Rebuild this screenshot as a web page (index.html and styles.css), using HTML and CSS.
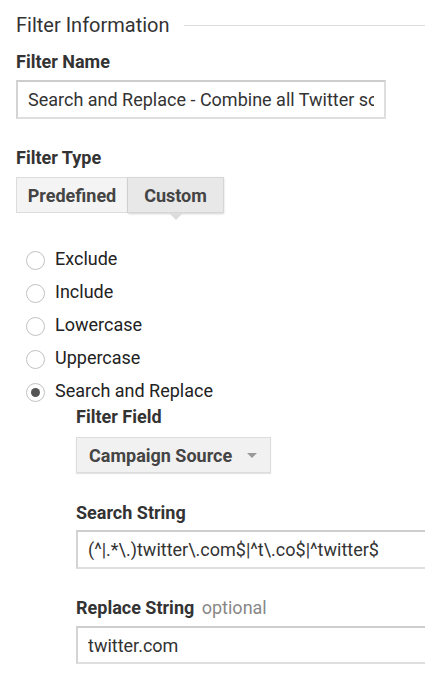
FILE: index.html
```html
<!DOCTYPE html>
<html lang="en">
<head>
    <meta charset="UTF-8">
    <meta name="viewport" content="width=device-width, initial-scale=1.0">
    <title>Filter Information</title>
    <link rel="stylesheet" href="styles.css">
</head>
<body>
    <div class="panel">
        <div class="section-title">
            <h2>Filter Information</h2>
            <span class="rule"></span>
        </div>

        <label class="field-label name-label" for="filter-name">Filter Name</label>
        <input id="filter-name" class="text-input name-input" type="text" value="Search and Replace - Combine all Twitter sources" readonly>

        <label class="field-label type-label">Filter Type</label>
        <div class="toggle">
            <button class="toggle-btn predefined">Predefined</button>
            <button class="toggle-btn custom active">Custom</button>
        </div>

        <ul class="radio-list">
            <li class="radio-row"><span class="radio"></span><span class="radio-text">Exclude</span></li>
            <li class="radio-row"><span class="radio"></span><span class="radio-text">Include</span></li>
            <li class="radio-row"><span class="radio"></span><span class="radio-text">Lowercase</span></li>
            <li class="radio-row"><span class="radio"></span><span class="radio-text">Uppercase</span></li>
            <li class="radio-row"><span class="radio checked"></span><span class="radio-text">Search and Replace</span></li>
        </ul>

        <div class="sub-fields">
            <label class="field-label field-label-first">Filter Field</label>
            <div class="dropdown">
                <span>Campaign Source</span>
                <span class="caret"></span>
            </div>

            <label class="field-label search-label" for="search-string">Search String</label>
            <input id="search-string" class="text-input wide-input" type="text" value="(^|.*\.)twitter\.com$|^t\.co$|^twitter$" readonly>

            <label class="field-label replace-label" for="replace-string">Replace String <span class="optional">optional</span></label>
            <input id="replace-string" class="text-input wide-input short-input" type="text" value="twitter.com" readonly>
        </div>
    </div>
</body>
</html>
```

FILE: styles.css
```css
* {
    margin: 0;
    padding: 0;
    box-sizing: border-box;
}

body {
    font-family: Roboto, 'Noto Sans', sans-serif;
    color: #222;
    background-color: #fff;
    overflow: hidden;
}

.panel {
    padding: 12px 0 0 16px;
    width: 425px;
}

.section-title {
    display: flex;
    align-items: center;
    gap: 14px;
    height: 26px;
}

.section-title h2 {
    font-size: 20px;
    font-weight: 400;
    color: #333;
    line-height: 26px;
    white-space: nowrap;
}

.rule {
    flex: 1;
    height: 1px;
    background-color: #ddd;
}

.field-label {
    display: block;
    font-size: 18px;
    font-weight: 700;
    color: #333;
    line-height: 22px;
}

.name-label {
    margin-top: 13px;
}

.text-input {
    display: block;
    margin-top: 7px;
    height: 39px;
    padding: 0 10px;
    border: 2px solid #dedede;
    border-top-color: #cdcdcd;
    border-left-color: #d4d4d4;
    border-radius: 0;
    font-family: inherit;
    font-size: 18px;
    color: #333;
    background-color: #fff;
    outline: none;
}

.name-input {
    width: 370px;
}

.type-label {
    margin-top: 28px;
}

.toggle {
    display: flex;
    margin-top: 8px;
}

.toggle-btn {
    position: relative;
    height: 36px;
    font-family: inherit;
    font-size: 18px;
    font-weight: 700;
    color: #444;
    text-align: center;
    background-color: #f4f4f4;
    border: 1px solid #dcdcdc;
}

.predefined {
    width: 112px;
}

.custom {
    width: 96px;
    border-left: none;
}

.toggle-btn.active {
    background-color: #e8e8e8;
    border-color: #d6d6d6;
    box-shadow: 0 1px 2px rgba(0, 0, 0, 0.18);
}

.toggle-btn.active::after {
    content: "";
    position: absolute;
    left: 50%;
    bottom: -8px;
    margin-left: -7px;
    border-left: 7px solid transparent;
    border-right: 7px solid transparent;
    border-top: 7px solid #dcdcdc;
}

.radio-list {
    list-style: none;
    margin-top: 31px;
    padding-left: 10px;
}

.radio-row {
    display: flex;
    align-items: center;
    height: 33px;
    font-size: 18px;
    color: #222;
}

.radio {
    flex: none;
    width: 19px;
    height: 19px;
    margin-right: 10px;
    border: 1px solid #c2c2c2;
    border-radius: 50%;
    display: flex;
    align-items: center;
    justify-content: center;
}

.radio.checked::after {
    content: "";
    width: 9px;
    height: 9px;
    border-radius: 50%;
    background-color: #555;
}

.radio-text {
    padding-bottom: 5px;
}

.sub-fields {
    padding-left: 60px;
}

.field-label-first {
    margin-top: -3px;
}

.dropdown {
    display: flex;
    align-items: center;
    justify-content: space-between;
    width: 195px;
    height: 36px;
    margin-top: 9px;
    padding: 0 13px 0 12px;
    font-size: 18px;
    font-weight: 700;
    color: #444;
    background-color: #f1f1f1;
    border: 1px solid #dcdcdc;
    box-shadow: 0 1px 1px rgba(0, 0, 0, 0.1);
}

.caret {
    border-left: 5px solid transparent;
    border-right: 5px solid transparent;
    border-top: 5px solid #999;
}

.search-label {
    margin-top: 29px;
}

.wide-input {
    margin-top: 6px;
    width: 360px;
    border-right: none;
}

.replace-label {
    margin-top: 28px;
}

.short-input {
    margin-top: 7px;
    height: 38px;
}

.optional {
    font-weight: 400;
    color: #888;
    margin-left: 3px;
}
```
